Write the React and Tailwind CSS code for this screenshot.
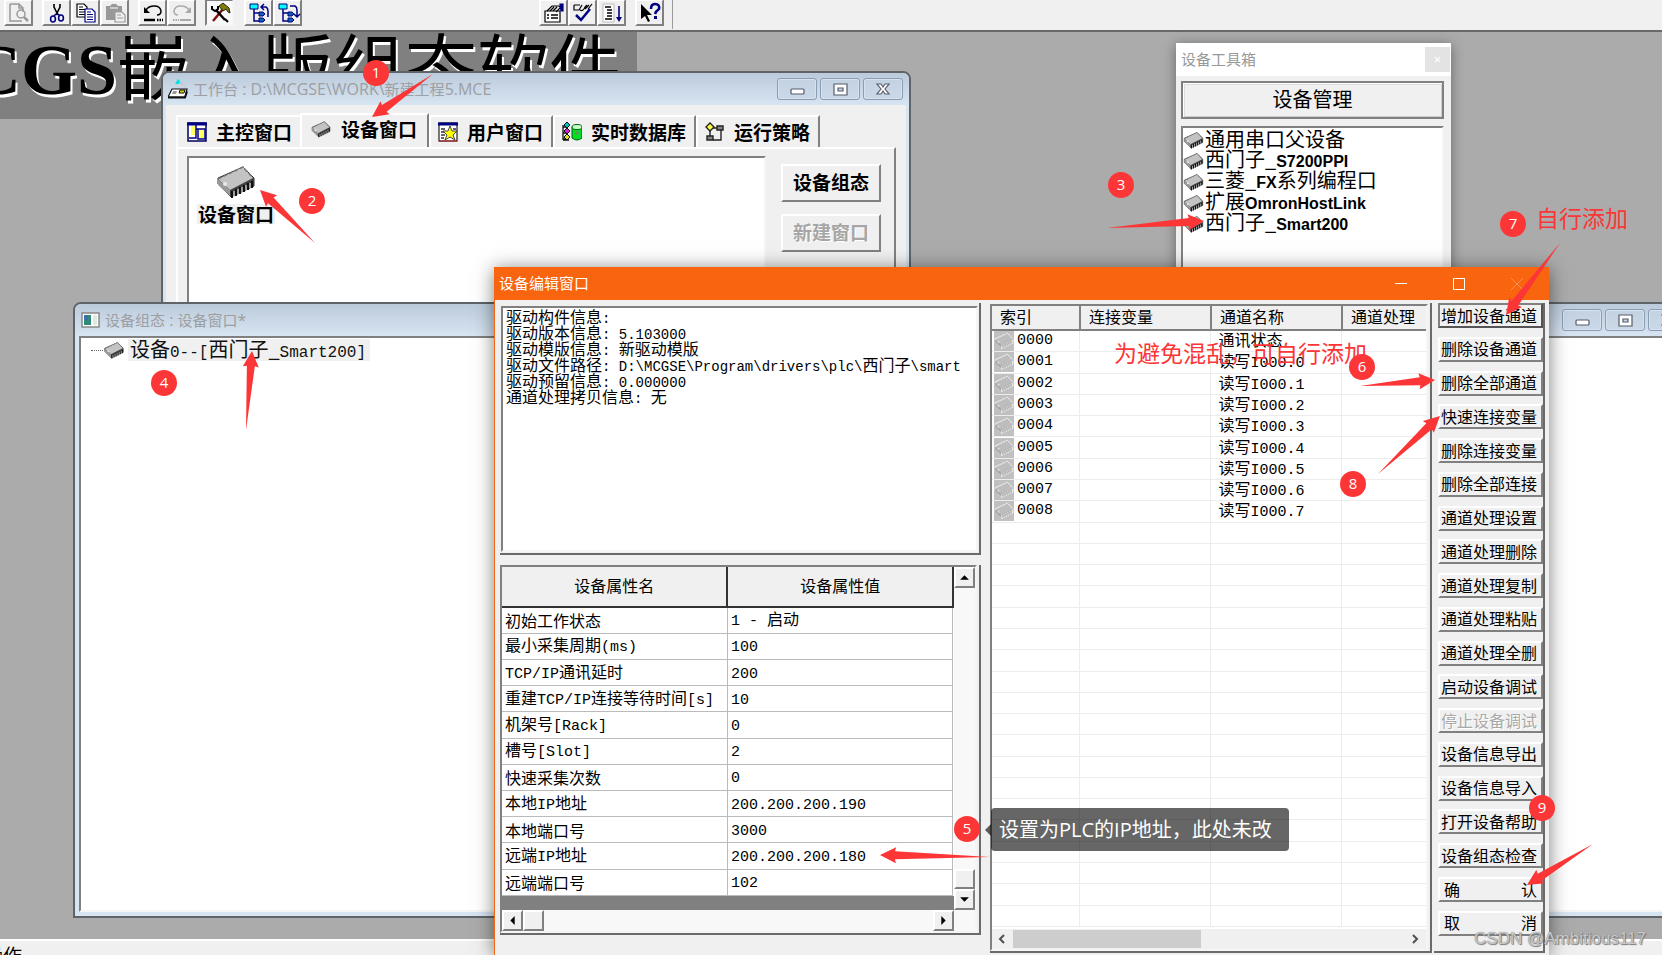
import React from 'react'

const raised = 'bg-[#f0f0f0] border-2 border-t-white border-l-white border-r-[#808080] border-b-[#808080]'
const sunken = 'border-2 border-t-[#808080] border-l-[#808080] border-r-[#f5f5f5] border-b-[#f5f5f5]'

const driverInfo = [
  '驱动构件信息:',
  '驱动版本信息: 5.103000',
  '驱动模版信息: 新驱动模版',
  '驱动文件路径: D:\\MCGSE\\Program\\drivers\\plc\\西门子\\smart',
  '驱动预留信息: 0.000000',
  '通道处理拷贝信息: 无',
]

const properties = [
  ['初始工作状态', '1 - 启动'],
  ['最小采集周期(ms)', '100'],
  ['TCP/IP通讯延时', '200'],
  ['重建TCP/IP连接等待时间[s]', '10'],
  ['机架号[Rack]', '0'],
  ['槽号[Slot]', '2'],
  ['快速采集次数', '0'],
  ['本地IP地址', '200.200.200.190'],
  ['本地端口号', '3000'],
  ['远端IP地址', '200.200.200.180'],
  ['远端端口号', '102'],
]

const channels = [
  '通讯状态',
  '读写I000.0',
  '读写I000.1',
  '读写I000.2',
  '读写I000.3',
  '读写I000.4',
  '读写I000.5',
  '读写I000.6',
  '读写I000.7',
]

const actions = [
  '增加设备通道',
  '删除设备通道',
  '删除全部通道',
  '快速连接变量',
  '删除连接变量',
  '删除全部连接',
  '通道处理设置',
  '通道处理删除',
  '通道处理复制',
  '通道处理粘贴',
  '通道处理全删',
  '启动设备调试',
  '停止设备调试',
  '设备信息导出',
  '设备信息导入',
  '打开设备帮助',
  '设备组态检查',
  '确认',
  '取消',
]

const toolboxItems = ['通用串口父设备', '西门子_S7200PPI', '三菱_FX系列编程口', '扩展OmronHostLink', '西门子_Smart200']

// Latin runs get their own face and size, Chinese keeps the parent's
const Mixed = ({ text, latin = "font-['Liberation_Mono',monospace] text-[15px]" }) =>
  text.split(/([\x20-\x5e\x60-\x7e]+)/).map((part, i) =>
    i % 2 ? (
      <span key={i} className={`whitespace-pre ${latin}`}>
        {part}
      </span>
    ) : (
      part
    )
  )

const Chip = ({ className, faded }) => (
  <svg viewBox="0 0 40 33" className={className} aria-hidden="true">
    <path
      d="M2 12 L27 1 L38 12 L38 20 L15 31 L2 18 Z"
      fill={faded ? '#b4b4b4' : '#404040'}
      stroke={faded ? '#fff' : '#303030'}
      strokeWidth="1"
    />
    <path d="M2 13 L27 1 L37 12 L14 24 Z" fill={faded ? '#bdbdbd' : '#c3c3c3'} />
    <path d="M2 13 L14 24 L14 30 L2 19 Z" fill={faded ? '#aaaaaa' : '#9a9a9a'} />
    <path d="M2 13 L27 1 L37 12" fill="none" stroke={faded ? '#fff' : '#777'} strokeWidth="1.5" strokeDasharray="4 2" />
    <path
      d="M16 25 v7 M20 23 v7 M24 21 v7 M28 19 v7 M32 17 v7 M36 15 v7"
      stroke={faded ? '#fff' : '#111'}
      strokeWidth="2"
    />
    <path
      d="M18 25 v5 M22 23 v5 M26 21 v5 M30 19 v5 M34 17 v5"
      stroke={faded ? '#777' : '#d0d0d0'}
      strokeWidth="1.3"
    />
    <circle cx="9" cy="18" r="2" fill={faded ? '#ddd' : '#e8e8e8'} />
  </svg>
)

/* ---------- toolbar ---------- */

const toolIcons = {
  preview: (
    <g fill="none" stroke="#999" strokeWidth="1.5">
      <path d="M1 1 h9 l4 4 v4 M1 1 v17 h12 M10 1 v4 h4" />
      <circle cx="12" cy="11" r="4" />
      <path d="M15 14 l4 4" strokeWidth="2.5" />
    </g>
  ),
  cut: (
    <g fill="none" strokeWidth="1.6">
      <path d="M7 1 v3 l4 8 M13 1 v3 l-4 8" stroke="#000" />
      <path d="M9 11 l-2 2 M11 11 l2 2" stroke="#000080" />
      <ellipse cx="6" cy="16" rx="2.4" ry="3" stroke="#000080" />
      <ellipse cx="14" cy="15" rx="2.4" ry="3" stroke="#000080" />
    </g>
  ),
  copy: (
    <g strokeWidth="1.2">
      <path d="M1 1 h7 l3 3 v10 h-10 Z" fill="#fff" stroke="#000" />
      <path d="M3 4 h4 M3 6.500 h6 M3 9 h6 M3 11.500 h6" stroke="#000" />
      <path d="M9 6 h7 l3 3 v10 h-10 Z" fill="#fff" stroke="#000080" />
      <path d="M11 9 h4 M11 11.500 h6 M11 14 h6 M11 16.500 h6" stroke="#000080" />
    </g>
  ),
  paste: (
    <g>
      <path d="M1 3 h4 l2 -2 h4 l2 2 h4 v6 h-7 v8 h-9 Z" fill="#999" />
      <path d="M5 5 h8" stroke="#ddd" strokeWidth="1.5" />
      <path d="M10 9 h7 l3 3 v7 h-10 Z" fill="#f0f0f0" stroke="#999" strokeWidth="1.2" />
      <path d="M12 12 h4 M12 15 h6" stroke="#999" strokeWidth="1.2" />
    </g>
  ),
  undo: (
    <g fill="none" stroke="#000">
      <path d="M3 7 c3 -5 14 -6 15 1 c0 3 -2 4 -4 4" strokeWidth="1.5" />
      <path d="M1 4 v6 h6 Z" fill="#000" stroke="none" />
      <path d="M1 17 h11" strokeWidth="2.5" />
      <path d="M14 17 h6" strokeWidth="2.5" strokeDasharray="1.500 1" />
    </g>
  ),
  redo: (
    <g fill="none" stroke="#aaa">
      <path d="M17 7 c-3 -5 -14 -6 -15 1 c0 3 2 4 4 4" strokeWidth="1.5" />
      <path d="M19 4 v6 h-6 Z" fill="#aaa" stroke="none" />
      <path d="M8 17 h11" strokeWidth="2" />
      <path d="M1 17 h6" strokeWidth="2" strokeDasharray="1.500 1" />
    </g>
  ),
  tools: (
    <g fill="none">
      <path d="M13 6 L3 18" stroke="#7a1010" strokeWidth="2.5" />
      <path d="M6 7 L15 17" stroke="#000" strokeWidth="2.5" />
      <path d="M2 3 v3 l3 2 l3 -2 v-3 M15 16 l3 3" stroke="#000" strokeWidth="2" />
      <path d="M9 3 l4 -3 l6 5 l1 5 l-2 -1 l-2 -3 l-3 2 Z" fill="#808000" stroke="#222" strokeWidth="1" />
    </g>
  ),
  treeUp: (
    <g fill="none">
      <path d="M5 6 v12 h5 M5 10 h6" stroke="#000080" strokeWidth="1.5" />
      <path d="M1 1 h8 v5 h-8 Z" fill="#00ffff" stroke="#000080" />
      <path d="M10 9 h4 l2 2 l-2 2 h-4 Z M10 15 h4 l2 2 l-2 2 h-4 Z" fill="#1060b0" stroke="#000080" />
      <path d="M13 4 h4 q2 1 2 4 v6 M15 1 l-3 3 l3 3" stroke="#000080" strokeWidth="1.5" />
    </g>
  ),
  treeDown: (
    <g fill="none">
      <path d="M5 6 v12 h5 M5 10 h6" stroke="#000080" strokeWidth="1.5" />
      <path d="M1 1 h8 v5 h-8 Z" fill="#00ffff" stroke="#000080" />
      <path d="M10 9 h4 l2 2 l-2 2 h-4 Z M10 15 h4 l2 2 l-2 2 h-4 Z" fill="#1060b0" stroke="#000080" />
      <path d="M12 3 h5 q2 1 2 4 v6 M16 11 l3 3 l3 -3" stroke="#000080" strokeWidth="1.500" />
    </g>
  ),
  props: (
    <g fill="none" stroke="#000" strokeWidth="1.2">
      <path d="M1 8 h15 v11 h-15 Z" fill="#fff" />
      <path d="M3 12 h2 M7 12 h7 M3 15 h2 M7 15 h7" strokeWidth="1.500" />
      <path d="M3 8 l5 -5 h7 l3 3 M6 8 l4 -4 M9 8 l4 -4 M12 9 l4 -4" />
      <path d="M16 1 h3 v7 h-2 Z" fill="#000080" stroke="#000080" />
    </g>
  ),
  check: (
    <g fill="none" stroke="#000" strokeWidth="1.2">
      <path d="M1 2 h6 M1 2 v5 h5 l3 -5 M7 7 q3 2 5 -3 l2 -2 M12 6 l4 -4 M15 6 l4 -5" />
      <path d="M3 12 l5 5 l9 -11" stroke="#000080" strokeWidth="2.5" />
    </g>
  ),
  order: (
    <g fill="none">
      <path d="M1 1 h11 v18 h-11 Z" fill="#fff" stroke="#bbb" />
      <path d="M3 4 h6 M5 7 h5 M5 10 h5 M5 13 h5 M3 16 h7" stroke="#000" strokeWidth="1.500" />
      <path d="M17 3 v13" stroke="#000080" strokeWidth="1.600" />
      <path d="M14 14 h6 l-3 5 Z" fill="#000080" />
    </g>
  ),
  help: (
    <g>
      <path d="M1 1 v15 l4 -3 l3 6 l2 -1 l-3 -6 h5 Z" fill="#000" />
      <path d="M11 6 q0 -5 4 -5 q5 0 4 5 q-3 2 -4 5" fill="none" stroke="#000080" strokeWidth="2.5" />
      <path d="M14 13 h3 v3 h-3 Z" fill="#000080" />
    </g>
  ),
}

const ToolButton = ({ name, pressed }) => (
  <button
    aria-label={name}
    className={`flex h-[27px] w-[29px] items-center justify-center ${pressed ? `bg-[#f8f8f8] ${sunken}` : raised}`}
  >
    <svg viewBox="0 0 20 20" className="h-5 w-5 overflow-visible">
      {toolIcons[name]}
    </svg>
  </button>
)

const Toolbar = () => (
  <header className="flex h-8 shrink-0 items-start border-b-2 border-[#696969] bg-[#f0f0f0]">
    <div className="flex h-full w-[673px] items-start border-r border-[#9a9a9a] pl-1 -mt-px">
      <div className="mr-[9px] flex">
        <ToolButton name="preview" />
      </div>
      <div className="mr-[9px] flex">
        <ToolButton name="cut" />
        <ToolButton name="copy" />
        <ToolButton name="paste" />
      </div>
      <div className="mr-[9px] flex">
        <ToolButton name="undo" />
        <ToolButton name="redo" />
      </div>
      <div className="mr-[10px] flex">
        <ToolButton name="tools" pressed />
      </div>
      <div className="mr-auto flex">
        <ToolButton name="treeUp" />
        <ToolButton name="treeDown" />
      </div>
      <div className="mr-[9px] flex">
        <ToolButton name="props" />
        <ToolButton name="check" />
        <ToolButton name="order" />
      </div>
      <div className="mr-2 flex">
        <ToolButton name="help" />
      </div>
    </div>
  </header>
)

/* ---------- MDI child windows ---------- */

const captionGlyphs = [
  ['最小化', <rect x="4" y="9" width="13" height="5" rx="1" />],
  [
    '最大化',
    <path fillRule="evenodd" d="M4 4 h13 v11 h-13 Z M8 8 v3 h5 v-3 Z" />,
  ],
  ['关闭', <path d="M4 4 h4 l2 3 l2 -3 h4 l-4 5 l4 5 h-4 l-2 -3 l-2 3 h-4 l4 -5 Z" />],
]

const CaptionButtons = () => (
  <div className="flex gap-[3px]">
    {captionGlyphs.map(([label, glyph]) => (
      <button
        key={label}
        aria-label={label}
        className="flex h-[22px] w-10 items-center justify-center rounded-[3px] border border-[#8b9cb5] bg-linear-to-b from-[#c3d2e2] to-[#cbd8e7] shadow-[inset_0_0_0_1px_#d6e2ee]"
      >
        <svg viewBox="0 0 21 19" className="h-[19px] w-[21px]" fill="#fff" stroke="#555b6b" strokeWidth="1.2">
          {glyph}
        </svg>
      </button>
    ))}
  </div>
)

const ChildWindow = ({ className, icon, title, children }) => (
  <section
    className={`absolute flex flex-col rounded-t-lg border-2 border-[#5f6468] bg-[#d7e4f2] ${className}`}
  >
    <div className="flex h-8 shrink-0 items-center rounded-t-md bg-linear-to-b from-[#bccbdb] to-[#d7e4f2] pr-[6px]">
      <div className="flex w-[30px] shrink-0 justify-center">{icon}</div>
      <h2 className="grow whitespace-pre text-[15px] leading-5 text-[#9c9fa3]">
        <Mixed text={title} latin="font-['Open_Sans',sans-serif] text-[16px]" />
      </h2>
      <CaptionButtons />
    </div>
    {children}
  </section>
)

const tabIcons = {
  main: (
    <g>
      <rect x="1" y="1" width="18" height="18" fill="#fff" stroke="#000060" strokeWidth="1.5" />
      <path d="M0 2 h20" stroke="#000080" strokeWidth="3" />
      <path d="M4 4 h4 v9 h-4 Z M12 8 h5 v8 h-5 Z" fill="#ffff60" />
      <path d="M9 3 v13 h-7 M9 7 h9 v10 h-7 v-10" fill="none" stroke="#000080" strokeWidth="1.5" />
    </g>
  ),
  user: (
    <g>
      <rect x="1" y="1" width="18" height="18" fill="#fff" stroke="#222" strokeWidth="1.2" />
      <path d="M0 2 h20" stroke="#000080" strokeWidth="3" />
      <path d="M3 7 h4 M3 10 h3 M3 13 h4 M3 16 h3 M15 7 h3" stroke="#333" strokeWidth="1.3" />
      <path d="M1 19 h18" stroke="#c02020" />
      <path
        d="M12 4 l2 5 h5 l-4 4 l2 5 l-5 -3 l-5 3 l2 -5 l-4 -4 h5 Z"
        fill="#ffff00"
        stroke="#444"
        strokeWidth="1"
      />
    </g>
  ),
  db: (
    <g>
      <path d="M1 3 v15 M1 5 h4 M1 11 h4 M1 17 h4 M1 18 h6" stroke="#111" strokeWidth="1.3" fill="none" />
      <path d="M5 0 l3 3 l-3 3 l-3 -3 Z" fill="#00c0c0" stroke="#111" />
      <path d="M5 6 l3 3 l-3 3 l-3 -3 Z" fill="#d020d0" stroke="#111" />
      <path d="M5 12 l3 3 l-3 3 l-3 -3 Z" fill="#e0e020" stroke="#111" />
      <path d="M10 5 v11 q5 4 10 0 v-11" fill="#00e020" stroke="#006010" />
      <ellipse cx="15" cy="5" rx="5" ry="2.5" fill="#c8ffc8" stroke="#006010" />
      <path d="M13 11 h4 M15 9 v4" stroke="#6a8a6a" strokeWidth="1.300" />
    </g>
  ),
  strategy: (
    <g fill="none" stroke="#222" strokeWidth="1.4">
      <path d="M5 8 v7 M8 6 h5 M16 8 v10 h-8" />
      <path d="M5 1 l4 4 l-4 4 l-4 -4 Z" fill="#ffff40" />
      <path d="M12 4 h6 v4 h-6 Z M2 14 h6 v4 h-6 Z" fill="#888" />
    </g>
  ),
}

const TabIcon = ({ name }) =>
  name === 'device' ? (
    <Chip className="h-[17px] w-5" />
  ) : (
    <svg viewBox="0 0 20 20" className="h-5 w-5" aria-hidden="true">
      {tabIcons[name]}
    </svg>
  )

const tabs = [
  ['main', '主控窗口'],
  ['device', '设备窗口'],
  ['user', '用户窗口'],
  ['db', '实时数据库'],
  ['strategy', '运行策略'],
]

const Workbench = () => (
  <ChildWindow
    className="left-[161px] top-[39px] h-[330px] w-[750px]"
    title="工作台 : D:\MCGSE\WORK\新建工程5.MCE"
    icon={
      <svg viewBox="0 0 20 20" className="h-5 w-5">
        <path d="M7 5 l3 -5 l4 5 Z" fill="#00e0e0" />
        <path d="M11 4 l6 3 v6" fill="none" stroke="#ccc" strokeWidth="1.5" />
        <path d="M4 10 h15 l-2 8 h-17 Z" fill="#fff" stroke="#111" strokeWidth="1.2" />
        <path d="M12 11 h5 l-1 3 h-5 Z" fill="#d8d800" stroke="#111" />
        <path d="M5 12 h4 l-1 3 h-4 Z" fill="#999" />
        <path d="M0 18.500 h17 l2 -6" fill="none" stroke="#111" strokeWidth="2" />
      </svg>
    }
  >
    <div className="mx-[3px] flex grow flex-col bg-[#f0f0f0] px-[10px] pt-2">
      <div role="tablist" className="flex h-[34px] items-end">
        {tabs.map(([name, label]) => (
          <button
            key={name}
            role="tab"
            aria-selected={name === 'device'}
            className={
              name === 'device'
                ? 'flex h-[34px] items-center gap-[10px] border-l-2 border-r-2 border-t-2 border-l-white border-r-[#808080] border-t-white pb-1 pl-[9px] pr-[10px]'
                : 'flex h-8 items-center gap-[9px] border-l-2 border-r-2 border-t-2 border-l-white border-r-[#808080] border-t-white pb-px pl-[7px] pr-2 first:border-r-0 first:pl-[9px]'
            }
          >
            <TabIcon name={name} />
            <span className="whitespace-nowrap text-[19px] font-bold leading-6">{label}</span>
          </button>
        ))}
      </div>
      <div className="flex grow border-l-2 border-r-2 border-t-2 border-l-white border-r-[#808080] border-t-white pl-[9px] pt-[7px]">
        <div className={`flex w-[579px] items-start bg-white pl-2 pt-2 ${sunken}`}>
          <button className="flex flex-col items-center">
            <Chip className="h-[33px] w-10" />
            <span className="mt-[5px] bg-[#f0f0f0] px-px text-[19px] font-bold leading-5">设备窗口</span>
          </button>
        </div>
        <div className="flex flex-col gap-3 pl-[15px] pt-2">
          <button className={`h-[38px] w-[100px] pb-[2px] text-[19px] font-bold leading-6 ${raised}`}>设备组态</button>
          <button
            disabled
            className={`h-[38px] w-[100px] pb-[2px] text-[19px] font-bold leading-6 text-[#a6a6a6] [text-shadow:1px_1px_#fff] ${raised}`}
          >
            新建窗口
          </button>
        </div>
      </div>
    </div>
  </ChildWindow>
)

const DeviceConfig = () => (
  <ChildWindow
    className="bottom-[21px] left-[73px] -right-[34px] top-[270px]"
    title="设备组态 : 设备窗口*"
    icon={
      <svg viewBox="0 0 19 16" className="h-4 w-[19px]">
        <rect x="1" y="1" width="17" height="14" fill="#fff" stroke="#888" strokeWidth="1.5" />
        <path d="M3 3 h7 v10 h-7 Z" fill="#2f8a7a" />
        <path d="M3 3 h4 v5 h-4 Z" fill="#3f6fa8" />
        <path d="M12 3 h4 v10 h-4 Z" fill="#e0e8e0" />
      </svg>
    }
  >
    <div className={`mx-1 mb-1 grow bg-white ${sunken}`}>
      <div className="flex items-center pl-[10px] pt-px">
        <span className="w-3 border-t border-dotted border-[#666]" />
        <Chip className="h-[17px] w-[22px]" />
        <span className="ml-[3px] h-[22px] bg-[#f0f0f0] pl-[2px] pr-1 text-[20px] leading-5 text-[#111]">
          <Mixed text="设备0--[西门子_Smart200]" latin="font-['Liberation_Mono',monospace] text-[16px]" />
        </span>
      </div>
    </div>
  </ChildWindow>
)

const Toolbox = () => (
  <aside className="absolute left-[1176px] top-[43px] flex h-[300px] w-[275px] flex-col bg-[#f0f0f0] shadow-[0_2px_12px_rgba(0,0,0,0.4)]">
    <div className="flex h-[33px] shrink-0 items-center justify-between bg-white pl-[5px] pr-px">
      <h2 className="pb-[2px] text-[15px] leading-5 text-[#999]">设备工具箱</h2>
      <button aria-label="关闭" className="flex h-[25px] w-[25px] items-center justify-center bg-[#e3e3e3]">
        <svg viewBox="0 0 8 8" className="h-[7px] w-[7px]" stroke="#fff" strokeWidth="1.3">
          <path d="M1 1 l6 6 M7 1 l-6 6" />
        </svg>
      </button>
    </div>
    <div className="flex grow flex-col gap-[7px] pl-[5px] pr-[7px] pt-[5px]">
      <button className="h-[38px] border-2 border-[#808080] bg-[#f0f0f0] pb-[2px] text-[20px] leading-6 shadow-[inset_1px_1px_#fff,inset_2px_2px_#ddd,inset_-1px_-1px_#ccc]">
        设备管理
      </button>
      <ul className={`grow bg-white text-[20px] ${sunken}`}>
        {toolboxItems.map((item) => (
          <li key={item} className="flex h-[21px] items-center gap-px whitespace-nowrap leading-[21px]">
            <Chip className="mt-1 h-[17px] w-[21px]" />
            <span>
              <Mixed text={item} latin="font-['Liberation_Sans',sans-serif] text-[16px] font-bold" />
            </span>
          </li>
        ))}
      </ul>
    </div>
  </aside>
)

/* ---------- device editor ---------- */

const ScrollButton = ({ label, d }) => (
  <button aria-label={label} className={`flex h-[21px] w-[21px] shrink-0 items-center justify-center ${raised}`}>
    <svg viewBox="0 0 10 10" className="h-[11px] w-[11px]">
      <path d={d} />
    </svg>
  </button>
)

const PropertyGrid = () => (
  <div className="flex h-[370px] flex-col border-b-2 border-r-2 border-[#6a6a6a] pr-[2px]">
    <div className={`flex grow flex-col ${sunken}`}>
      <div className="flex h-[343px]">
        <div className="flex grow flex-col bg-[#808080]">
          <table className="h-[329px] w-full table-fixed border-collapse bg-white text-[16px]">
            <thead>
              <tr className="h-10 bg-[#f0f0f0]">
                <th className="border-b-2 border-r-2 border-[#333] pb-1 font-normal leading-5">设备属性名</th>
                <th className="border-b-2 border-r-2 border-[#333] pb-1 font-normal leading-5">设备属性值</th>
              </tr>
            </thead>
            <tbody>
              {properties.map(([name, value]) => (
                <tr key={name} className="h-[26px] leading-5">
                  <td className="whitespace-nowrap border-b border-r border-[#bbb] p-0 pl-[3px]">
                    <Mixed text={name} />
                  </td>
                  <td className="whitespace-nowrap border-b border-r border-[#bbb] p-0 pl-[3px]">
                    <Mixed text={value} />
                  </td>
                </tr>
              ))}
            </tbody>
          </table>
        </div>
        <div className="flex w-[21px] flex-col bg-[#f8f8f8]">
          <ScrollButton label="向上" d="M5 3 l4 4 h-8 Z" />
          <div className={`mt-auto h-5 ${raised}`} />
          <ScrollButton label="向下" d="M5 7 l4 -4 h-8 Z" />
        </div>
      </div>
      <div className="flex h-[21px] bg-[#f8f8f8] pr-[21px]">
        <ScrollButton label="向左" d="M3 5 l4 -4 v8 Z" />
        <div className={`w-[21px] ${raised}`} />
        <span className="grow" />
        <ScrollButton label="向右" d="M7 5 l-4 -4 v8 Z" />
      </div>
    </div>
  </div>
)

const ChannelList = () => (
  <div className="flex w-[444px] flex-col border-b-2 border-r-2 border-[#6a6a6a] pr-[2px] pt-px">
    <div className={`flex grow flex-col bg-white ${sunken}`}>
      <table className="h-[621px] w-full table-fixed border-collapse text-left text-[16px]">
        <colgroup>
          <col className="w-[88px]" />
          <col className="w-[131px]" />
          <col className="w-[131px]" />
          <col />
        </colgroup>
        <thead>
          <tr className="h-6 bg-[#f0f0f0] leading-5">
            {['索引', '连接变量', '通道名称', '通道处理'].map((head) => (
              <th
                key={head}
                className="border-b-2 border-r-2 border-[#808080] p-0 pl-2 font-normal last:border-r-0"
              >
                <span className="block h-5 leading-4">{head}</span>
              </th>
            ))}
          </tr>
        </thead>
        <tbody>
          {Array.from({ length: 28 }, (_, i) => (
            <tr key={i} className="h-[21px] leading-5">
              <td className="border-b border-r border-[#ececec] p-0 pl-[2px]">
                {channels[i] && (
                  <span className="flex h-5 items-center gap-[3px]">
                    <Chip faded className="h-5 w-5 bg-[#c0c0c0]" />
                    <Mixed text={`000${i}`} />
                  </span>
                )}
              </td>
              <td className="border-b border-r border-[#ececec] p-0" />
              <td className="border-b border-r border-[#ececec] p-0 pl-[7px]">
                {channels[i] && (
                  <span className="block h-5 whitespace-nowrap leading-4">
                    <Mixed text={channels[i]} />
                  </span>
                )}
              </td>
              <td className="border-b border-[#ececec] p-0" />
            </tr>
          ))}
        </tbody>
      </table>
      <div className="mt-auto flex h-5 items-stretch bg-[#f0f0f0]">
        <button aria-label="向左" className="flex w-[21px] items-center justify-center">
          <svg viewBox="0 0 10 10" className="h-[10px] w-[10px]" fill="none" stroke="#505050" strokeWidth="2">
            <path d="M7 1 l-4 4 l4 4" />
          </svg>
        </button>
        <div className="my-px w-[188px] bg-[#cdcdcd]" />
        <button aria-label="向右" className="ml-auto flex w-[21px] items-center justify-center">
          <svg viewBox="0 0 10 10" className="h-[10px] w-[10px]" fill="none" stroke="#505050" strokeWidth="2">
            <path d="M3 1 l4 4 l-4 4" />
          </svg>
        </button>
      </div>
    </div>
  </div>
)

const DeviceEditor = () => (
  <section className="absolute bottom-0 left-[494px] top-[267px] flex w-[1055px] flex-col border-l border-[#f9640f] bg-[#f0f0f0] shadow-[0_2px_18px_rgba(0,0,0,0.5)]">
    <div className="flex h-[33px] shrink-0 items-center bg-[#f9640f] pl-1 pr-[26px]">
      <h2 className="grow pb-[2px] text-[15px] leading-5 text-white">设备编辑窗口</h2>
      <div className="flex gap-[46px]">
        <button aria-label="最小化" className="flex h-3 w-3 items-center">
          <span className="h-px w-3 bg-white" />
        </button>
        <button aria-label="最大化" className="h-3 w-3 border border-white" />
        <button aria-label="关闭" className="h-3 w-3">
          <svg viewBox="0 0 12 12" className="h-3 w-3" stroke="#ff8f55">
            <path d="M0 0 L12 12 M12 0 L0 12" />
          </svg>
        </button>
      </div>
    </div>
    <div className="flex grow pb-[2px] pl-[5px] pr-1 pt-[3px]">
      <div className="mr-[9px] flex w-[483px] flex-col gap-[10px]">
        <div className="flex h-[252px] flex-col border-b-2 border-r-2 border-[#6a6a6a] pb-px pl-px pr-px pt-[3px]">
          <div className={`grow overflow-hidden bg-white pl-[3px] text-[16px] leading-4 ${sunken}`}>
            {driverInfo.map((line) => (
              <p key={line} className="h-4 whitespace-nowrap">
                <Mixed text={line} latin="font-['Liberation_Mono',monospace] text-[14px]" />
              </p>
            ))}
          </div>
        </div>
        <PropertyGrid />
      </div>
      <ChannelList />
      <div className="ml-[2px] flex grow flex-col border-b-2 border-r-2 border-[#6a6a6a] pb-[15px] pl-1">
        <div className="flex grow flex-col justify-between">
          {actions.map((label, i) => (
            <button
              key={label}
              disabled={label === '停止设备调试'}
              className={`flex h-[25px] items-center justify-between whitespace-nowrap pb-[2px] pl-px pr-1 text-[16px] leading-5 disabled:text-[#a9a9a9] disabled:[text-shadow:1px_1px_#fff] ${
                i === 0
                  ? 'border-2 border-b-[#555] border-l-[#808080] border-r-[#555] border-t-[#808080] bg-[#f0f0f0]'
                  : raised
              }`}
            >
              {label.length === 2 ? (
                <>
                  <span className="pl-[3px]">{label[0]}</span>
                  <span>{label[1]}</span>
                </>
              ) : (
                label
              )}
            </button>
          ))}
        </div>
      </div>
    </div>
  </section>
)

/* ---------- annotations ---------- */

const Badge = ({ n, className }) => (
  <span
    className={`absolute flex h-[26px] w-[26px] items-center justify-center rounded-full bg-[#fc3636] pb-[2px] font-['Open_Sans',sans-serif] text-[15px] leading-5 text-white ${className}`}
  >
    {n}
  </span>
)

// tail -> tip
const arrows = [
  [433, 74, 372, 117],
  [315, 243, 260, 190],
  [1107, 228, 1204, 221],
  [246, 430, 252, 351],
  [990, 857, 880, 855],
  [1360, 386, 1435, 380],
  [1560, 243, 1506, 315],
  [1378, 474, 1440, 416],
  [1593, 844, 1527, 885],
]

const arrowPoints = ([x1, y1, x2, y2]) => {
  const len = Math.hypot(x2 - x1, y2 - y1)
  const ux = (x2 - x1) / len
  const uy = (y2 - y1) / len
  const at = (back, side) => `${x2 - ux * back - uy * side},${y2 - uy * back + ux * side}`
  return [at(0, 0), at(16, 8), at(15, 4), at(len, 0), at(15, -4), at(16, -8)].join(' ')
}

const Annotations = () => (
  <div className="pointer-events-none absolute inset-0">
    <p className="absolute left-[1536px] top-[202px] whitespace-nowrap text-[23px] leading-[30px] text-[#fc3636]">
      自行添加
    </p>
    <p className="absolute left-[1114px] top-[337px] whitespace-nowrap text-[23px] leading-[30px] text-[#fc3636]">
      为避免混乱，可自行添加
    </p>
    <svg className="absolute inset-0 h-full w-full" fill="#fc3636" aria-hidden="true">
      {arrows.map((a) => (
        <polygon key={a.join()} points={arrowPoints(a)} />
      ))}
    </svg>
    <Badge n={1} className="left-[363px] top-[60px]" />
    <Badge n={2} className="left-[299px] top-[188px]" />
    <Badge n={3} className="left-[1108px] top-[172px]" />
    <Badge n={4} className="left-[151px] top-[370px]" />
    <Badge n={5} className="left-[954px] top-[816px]" />
    <Badge n={6} className="left-[1349px] top-[354px]" />
    <Badge n={7} className="left-[1500px] top-[211px]" />
    <Badge n={8} className="left-[1340px] top-[471px]" />
    <Badge n={9} className="left-[1529px] top-[795px]" />
    <div className="absolute left-[985px] top-[808px] flex items-center">
      <span className="border-y-[6px] border-r-[6px] border-y-transparent border-r-[#000000a0]" />
      <p className="h-[43px] w-[298px] whitespace-nowrap rounded bg-black/60 pl-2 font-['Open_Sans','Noto_Sans_CJK_SC',sans-serif] text-[20px] leading-[43px] text-white">
        设置为PLC的IP地址，此处未改
      </p>
    </div>
    <p className="absolute bottom-1 right-4 font-['Liberation_Sans',sans-serif] text-[17px] leading-6 text-[#c8c8c8] [text-shadow:1px_1px_1px_#777,0_0_1px_#777]">
      CSDN @Ambitious117
    </p>
  </div>
)

const App = () => {
  return (
    <div className="relative flex h-screen w-full flex-col overflow-hidden bg-[#ababab] font-['Noto_Sans_CJK_SC',sans-serif] text-black">
      <Toolbar />
      <main className="relative grow overflow-hidden">
        <div className="flex h-[87px] w-[637px] justify-end overflow-hidden bg-[#808080] pr-4">
          <h1 className="whitespace-nowrap font-['Liberation_Serif','Noto_Sans_CJK_SC',serif] text-[72px] leading-[76px] [text-shadow:2px_3px_#fff]">
            <span className="font-bold">MCGS</span>嵌入版组态软件
          </h1>
        </div>
        <Workbench />
        <DeviceConfig />
      </main>
      <footer className="h-4 shrink-0 overflow-hidden border-t-2 border-white bg-[#f0f0f0]">
        <p className="-ml-4 pt-1 text-[19px] leading-5">操作</p>
      </footer>
      <Toolbox />
      <DeviceEditor />
      <Annotations />
    </div>
  )
}

export default App
